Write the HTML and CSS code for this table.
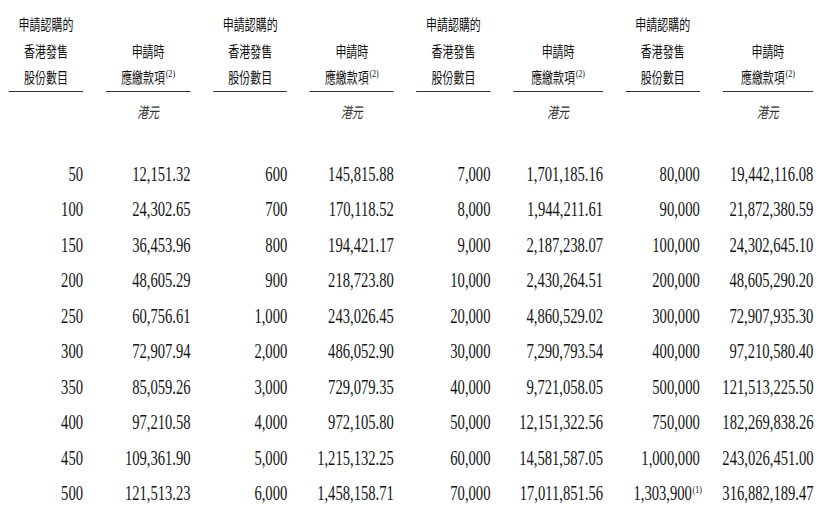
FILE: index.html
```html
<!DOCTYPE html>
<html lang="zh-Hant">
<head>
<meta charset="utf-8">
<title>申請認購的香港發售股份數目</title>
<link rel="stylesheet" href="styles.css">
</head>
<body>
<div class="frame">
<div class="page">
  <div class="table">
    <div class="hd"><span>申請認購的</span><span>香港發售</span><span>股份數目</span></div>
    <div class="hd"><span>申請時</span><span>應繳款項<sup>(2)</sup></span></div>
    <div class="hd"><span>申請認購的</span><span>香港發售</span><span>股份數目</span></div>
    <div class="hd"><span>申請時</span><span>應繳款項<sup>(2)</sup></span></div>
    <div class="hd"><span>申請認購的</span><span>香港發售</span><span>股份數目</span></div>
    <div class="hd"><span>申請時</span><span>應繳款項<sup>(2)</sup></span></div>
    <div class="hd"><span>申請認購的</span><span>香港發售</span><span>股份數目</span></div>
    <div class="hd"><span>申請時</span><span>應繳款項<sup>(2)</sup></span></div>

    <div class="unit"></div><div class="unit">港元</div>
    <div class="unit"></div><div class="unit">港元</div>
    <div class="unit"></div><div class="unit">港元</div>
    <div class="unit"></div><div class="unit">港元</div>

    <div class="n">50</div><div class="n">12,151.32</div><div class="n">600</div><div class="n">145,815.88</div><div class="n">7,000</div><div class="n">1,701,185.16</div><div class="n">80,000</div><div class="n">19,442,116.08</div>
    <div class="n">100</div><div class="n">24,302.65</div><div class="n">700</div><div class="n">170,118.52</div><div class="n">8,000</div><div class="n">1,944,211.61</div><div class="n">90,000</div><div class="n">21,872,380.59</div>
    <div class="n">150</div><div class="n">36,453.96</div><div class="n">800</div><div class="n">194,421.17</div><div class="n">9,000</div><div class="n">2,187,238.07</div><div class="n">100,000</div><div class="n">24,302,645.10</div>
    <div class="n">200</div><div class="n">48,605.29</div><div class="n">900</div><div class="n">218,723.80</div><div class="n">10,000</div><div class="n">2,430,264.51</div><div class="n">200,000</div><div class="n">48,605,290.20</div>
    <div class="n">250</div><div class="n">60,756.61</div><div class="n">1,000</div><div class="n">243,026.45</div><div class="n">20,000</div><div class="n">4,860,529.02</div><div class="n">300,000</div><div class="n">72,907,935.30</div>
    <div class="n">300</div><div class="n">72,907.94</div><div class="n">2,000</div><div class="n">486,052.90</div><div class="n">30,000</div><div class="n">7,290,793.54</div><div class="n">400,000</div><div class="n">97,210,580.40</div>
    <div class="n">350</div><div class="n">85,059.26</div><div class="n">3,000</div><div class="n">729,079.35</div><div class="n">40,000</div><div class="n">9,721,058.05</div><div class="n">500,000</div><div class="n">121,513,225.50</div>
    <div class="n">400</div><div class="n">97,210.58</div><div class="n">4,000</div><div class="n">972,105.80</div><div class="n">50,000</div><div class="n">12,151,322.56</div><div class="n">750,000</div><div class="n">182,269,838.26</div>
    <div class="n">450</div><div class="n">109,361.90</div><div class="n">5,000</div><div class="n">1,215,132.25</div><div class="n">60,000</div><div class="n">14,581,587.05</div><div class="n">1,000,000</div><div class="n">243,026,451.00</div>
    <div class="n">500</div><div class="n">121,513.23</div><div class="n">6,000</div><div class="n">1,458,158.71</div><div class="n">70,000</div><div class="n">17,011,851.56</div><div class="n">1,303,900<sup class="note">(1)</sup></div><div class="n">316,882,189.47</div>
  </div>
</div>
</div>
</body>
</html>
```

FILE: styles.css
```css
html, body {
  margin: 0;
  padding: 0;
  background: #ffffff;
  overflow: hidden;
}

.frame {
  width: 825px;
  height: 525px;
  overflow: hidden;
}

.page {
  width: 1127px;
  box-sizing: border-box;
  padding: 11px 0 0 12.3px;
  transform: scaleX(0.73);
  transform-origin: 0 0;
  color: #151515;
}

.table {
  display: grid;
  grid-template-columns: 101.4px 116.4px 101.4px 115px 101.4px 123.3px 101.4px 124.7px;
  column-gap: 31px;
}

.hd {
  display: flex;
  flex-direction: column;
  justify-content: flex-end;
  align-items: center;
  font-family: "Noto Sans CJK TC", "Noto Sans CJK SC", sans-serif;
  font-size: 15px;
  line-height: 26.7px;
  color: #111111;
  border-bottom: 1px solid #333333;
}

.hd sup {
  font-family: "Liberation Serif", serif;
  font-size: 11px;
  line-height: 0;
  vertical-align: 6px;
  margin-left: 1px;
}

.unit {
  font-family: "Noto Sans CJK TC", "Noto Sans CJK SC", sans-serif;
  font-style: italic;
  font-size: 15px;
  line-height: 26px;
  text-align: center;
  color: #333333;
  margin: 6.4px 0 32px;
}

.n {
  font-family: "Liberation Serif", "Times New Roman", serif;
  font-size: 20px;
  line-height: 35.5px;
  text-align: right;
  color: #141414;
  white-space: nowrap;
}

.note {
  font-size: 11px;
  line-height: 0;
  vertical-align: 7px;
  margin-left: 1px;
  margin-right: -3px;
}
```
